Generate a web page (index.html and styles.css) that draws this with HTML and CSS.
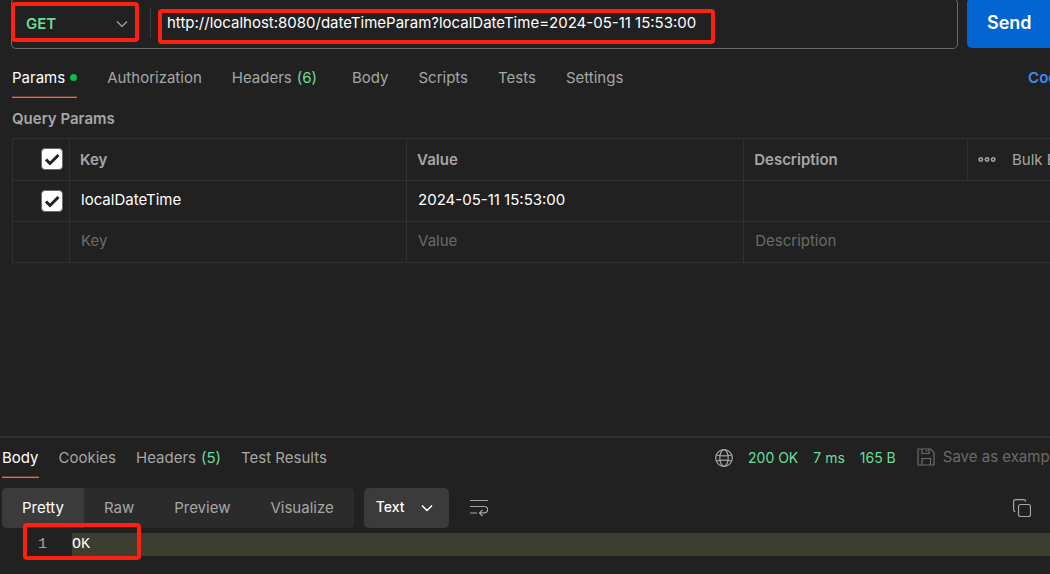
FILE: index.html
```html
<!DOCTYPE html>
<html lang="en">
<head>
<meta charset="utf-8">
<title>API request</title>
<link rel="stylesheet" href="styles.css">
</head>
<body>
<div class="app">
  <section class="request">
    <form class="url-row">
      <div class="url-bar">
        <div class="method">
          <select class="method-select" aria-label="HTTP method"><option>GET</option><option>POST</option></select>
          <svg class="chevron" viewBox="0 0 12 8" aria-hidden="true"><path d="M1 1.500l5 5 5-5"/></svg>
          <span class="mark mark-method"></span>
        </div>
        <div class="url">
          <input class="url-input" type="text" aria-label="Request URL" value="http://localhost:8080/dateTimeParam?localDateTime=2024-05-11 15:53:00">
          <span class="mark mark-url"></span>
        </div>
      </div>
      <button class="send" type="button">Send</button>
    </form>

    <nav class="tabs">
      <button class="tab active" type="button">Params<span class="dot"></span></button>
      <button class="tab" type="button">Authorization</button>
      <button class="tab tab-count" type="button">Headers <span class="count">(6)</span></button>
      <button class="tab" type="button">Body</button>
      <button class="tab" type="button">Scripts</button>
      <button class="tab" type="button">Tests</button>
      <button class="tab" type="button">Settings</button>
      <a class="cookies" href="#">Cookies</a>
    </nav>

    <h2 class="heading">Query Params</h2>
    <table class="params">
      <colgroup><col class="col-check"><col class="col-text"><col class="col-text"><col><col class="col-tools"></colgroup>
      <thead>
        <tr>
          <th><label class="check"><input type="checkbox" checked aria-label="Select all"><svg viewBox="0 0 22 22" aria-hidden="true"><path d="M5 11.500l4 4 8.500-8.500"/></svg></label></th>
          <th>Key</th>
          <th>Value</th>
          <th>Description</th>
          <th>
            <div class="tools">
              <button class="icon-button" type="button" aria-label="More"><svg class="dots" viewBox="0 0 16 6" aria-hidden="true"><circle cx="2.500" cy="3" r="1.500"/><circle cx="8" cy="3" r="1.500"/><circle cx="13.500" cy="3" r="1.500"/></svg></button>
              <button class="bulk" type="button">Bulk Edit</button>
            </div>
          </th>
        </tr>
      </thead>
      <tbody>
        <tr>
          <td><label class="check"><input type="checkbox" checked aria-label="Use localDateTime"><svg viewBox="0 0 22 22" aria-hidden="true"><path d="M5 11.500l4 4 8.500-8.500"/></svg></label></td>
          <td><input class="cell" type="text" aria-label="Key" value="localDateTime"></td>
          <td><input class="cell" type="text" aria-label="Value" value="2024-05-11 15:53:00"></td>
          <td colspan="2"><input class="cell" type="text" aria-label="Description"></td>
        </tr>
        <tr>
          <td></td>
          <td><input class="cell" type="text" aria-label="New key" placeholder="Key"></td>
          <td><input class="cell" type="text" aria-label="New value" placeholder="Value"></td>
          <td colspan="2"><input class="cell" type="text" aria-label="New description" placeholder="Description"></td>
        </tr>
      </tbody>
    </table>
  </section>

  <section class="response">
    <div class="response-head">
      <nav class="response-tabs">
        <button class="tab active" type="button">Body</button>
        <button class="tab" type="button">Cookies</button>
        <button class="tab" type="button">Headers <span class="count">(5)</span></button>
        <button class="tab" type="button">Test Results</button>
      </nav>
      <div class="status">
        <svg class="icon" viewBox="0 0 18 18" aria-hidden="true"><circle cx="9" cy="9" r="8.300"/><ellipse cx="9" cy="9" rx="4.200" ry="8.300"/><path d="M1.500 6q7.500 1.800 15 0M1.500 12q7.500-1.800 15 0"/></svg>
        <span>200 OK</span><span>7 ms</span><span>165 B</span>
      </div>
      <button class="save" type="button">
        <svg class="icon" viewBox="0 0 18 18" aria-hidden="true"><path d="M1 1h12.500L17 4.500V17H1zM5 1v4.500h7V1M9.500 2v2M5 17v-6.500h8.500V17"/></svg>
        Save as example
      </button>
    </div>

    <div class="toolbar">
      <div class="views">
        <button class="view selected" type="button">Pretty</button>
        <button class="view" type="button">Raw</button>
        <button class="view" type="button">Preview</button>
        <button class="view" type="button">Visualize</button>
      </div>
      <div class="format">
        <select class="format-select" aria-label="Response format"><option>Text</option><option>JSON</option></select>
        <svg class="chevron light" viewBox="0 0 12 8" aria-hidden="true"><path d="M1 1.500l5 5 5-5"/></svg>
      </div>
      <button class="icon-button" type="button" aria-label="Wrap lines"><svg class="icon" viewBox="0 0 18 18" aria-hidden="true"><path d="M0 1.500h18M0 7.500h14.500a3.200 3.200 0 0 1 0 6.400H9.500M0 14h7M12.500 10.800l-3 3.100 3 3.100"/></svg></button>
      <button class="icon-button copy" type="button" aria-label="Copy"><svg class="icon" viewBox="0 0 18 18" aria-hidden="true"><rect x="5.500" y="5.500" width="12" height="12" rx="2"/><path d="M2.500 12.500H2.200A1.700 1.700 0 0 1 .6 10.800V2.500A1.900 1.900 0 0 1 2.500.6h8.300a1.700 1.700 0 0 1 1.700 1.700v.4"/></svg></button>
    </div>

    <div class="code">
      <span class="line-number">1</span>
      <code class="line">OK</code>
      <span class="mark mark-code"></span>
    </div>
  </section>
</div>
</body>
</html>
```

FILE: styles.css
```css
* { box-sizing: border-box; }

body {
  margin: 0;
  height: 100vh;
  overflow: hidden;
  background: #212121;
  color: #a6a6a6;
  font: 15px/20px Inter, "Liberation Sans", sans-serif;
}

button, select, input {
  margin: 0;
  padding: 0;
  border: 0;
  background: none;
  color: inherit;
  font: inherit;
}

select { appearance: none; }
svg { fill: none; stroke: currentColor; stroke-width: 1.2; display: block; }

/* The workspace extends past the right edge of the window. */
.app {
  display: flex;
  flex-direction: column;
  width: calc(100% + 40px);
  height: 100%;
}

.request { flex: 1; padding-left: 12px; min-height: 0; }

.url-row { display: flex; gap: 9px; margin: -2px 0 0 -1px; }

.url-bar {
  display: flex;
  flex: 1;
  height: 51px;
  border: 1px solid #6b6b6b;
  border-radius: 5px;
}

.method {
  position: relative;
  display: flex;
  align-items: center;
  width: 127px;
}

.method-select {
  width: 100%;
  height: 48px;
  padding-left: 14px;
  color: #6bdd9a;
  font-weight: 600;
}

.chevron {
  position: absolute;
  right: 11px;
  width: 12px;
  height: 8px;
  pointer-events: none;
}

.chevron.light { right: 16px; color: #fff; stroke-width: 1.5; }

.url {
  position: relative;
  flex: 1;
  margin: 9px 0 10px 11px;
  padding-left: 16px;
  border-left: 1px solid #3d3d3d;
}

.url-input { display: block; width: 100%; height: 28px; color: #fff; }

.mark {
  position: absolute;
  border: 4px solid #ff2011;
  border-radius: 4px;
  pointer-events: none;
}

.mark-method { top: 3px; left: -1px; width: 128px; height: 40px; }
.mark-url { top: 1px; left: 7px; width: 557px; height: 35px; }
.mark-code { top: -10px; left: 23px; width: 118px; height: 37px; }

.send {
  width: 123px;
  height: 50px;
  padding-left: 20px;
  border-radius: 5px;
  background: #0265d2;
  color: #fff;
  font-size: 18px;
  font-weight: 600;
  text-align: left;
}

.tabs { display: flex; gap: 30px; margin-top: 9px; }

.tab {
  display: flex;
  align-items: center;
  gap: 5px;
  height: 40px;
  border-bottom: 1px solid transparent;
  white-space: nowrap;
}

.tab.active {
  border-bottom-color: #f26b3a;
  box-shadow: inset 0 -1px #6b3a29;
  color: #fff;
}

.tab-count { margin-right: 5px; }
.count { color: #6bdd9a; }
.dot { width: 7px; height: 7px; border-radius: 50%; background: #0cbb52; }

.cookies {
  margin: 10px 3px 0 auto;
  color: #3f8cf5;
  font-weight: 600;
  text-decoration: none;
}

.heading { margin: 11px 0 9px; font-size: 15px; line-height: 20px; font-weight: 600; }

.params { width: 100%; table-layout: fixed; border-collapse: collapse; }
.col-check { width: 57px; }
.col-text { width: 31.3%; }
.col-tools { width: 122px; }

.params th, .params td {
  height: 41px;
  padding: 0 0 0 10px;
  border: 1px solid #303030;
  text-align: left;
}

.params th { height: 42px; font-weight: 600; }
.params td { padding: 0 0 3px 11px; }
.cell { display: block; width: 100%; height: 36px; color: #fff; }
.cell::placeholder { color: #6b6b6b; opacity: 1; }

.params th:first-child, .params td:first-child { padding: 0 6px 1px 0; }
.check { display: grid; justify-content: end; }
.check > * { grid-area: 1 / 1; width: 22px; height: 22px; }
.check input { appearance: none; border: 1px solid #6b6b6b; border-radius: 4px; background: #fff; }
.check svg { color: #212121; stroke-width: 3; pointer-events: none; }

.tools { display: flex; align-items: center; gap: 16px; }
.dots { width: 18px; height: 7px; stroke-width: 1.4; }
.bulk { font-weight: 400; white-space: nowrap; }

.response { border-top: 2px solid #303030; height: 138px; }
.response-head { display: flex; align-items: center; padding-left: 2px; }
.response-tabs { display: flex; gap: 20px; }
.icon { width: 18px; height: 18px; }

.status {
  display: flex;
  align-items: center;
  gap: 15px;
  margin-left: auto;
  color: #6bdd9a;
  font-size: 14px;
}

.status .icon { color: #a6a6a6; }

.save {
  display: flex;
  align-items: center;
  gap: 8px;
  margin: 0 28px 3px 21px;
  color: #6b6b6b;
  white-space: nowrap;
}

.toolbar { display: flex; align-items: center; height: 40px; margin: 10px 0 5px; padding-left: 2px; }
.views { display: flex; overflow: hidden; border-radius: 5px; background: #2b2b2b; }
.view { height: 40px; padding: 0 20px; }
.view.selected { background: #3b3b3b; color: #fff; }

.format { position: relative; display: flex; align-items: center; width: 85px; margin: 0 21px 0 10px; }

.format-select {
  width: 100%;
  height: 40px;
  padding: 0 0 2px 12px;
  border-radius: 5px;
  background: #3b3b3b;
  color: #fff;
  font-size: 14px;
  font-weight: 500;
}

.copy { margin: 0 59px 0 auto; }

.code {
  position: relative;
  display: flex;
  font: 15px/23px "Liberation Mono", monospace;
}

.line-number { width: 72px; padding-left: 38px; }
.line { flex: 1; background: #3d3d30; color: #fff; font: inherit; }
```
